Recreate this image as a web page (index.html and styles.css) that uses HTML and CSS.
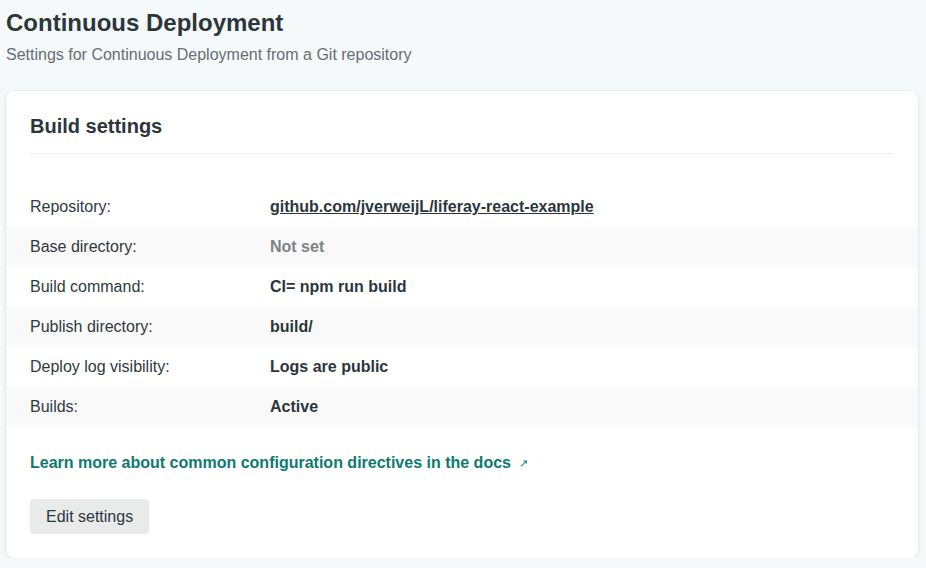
FILE: index.html
```html
<!DOCTYPE html>
<html>
<head>
<meta charset="utf-8">
<link rel="stylesheet" href="styles.css">
</head>
<body>
<div class="page">
  <header class="page-header">
    <h1 class="page-title">Continuous Deployment</h1>
    <p class="page-subtitle">Settings for Continuous Deployment from a Git repository</p>
  </header>
  <section class="card">
    <div class="card-header">
      <h2 class="card-title">Build settings</h2>
    </div>
    <dl class="settings">
      <div class="row"><dt>Repository:</dt><dd><a class="repo" href="#">github.com/jverweijL/liferay-react-example</a></dd></div>
      <div class="row striped"><dt>Base directory:</dt><dd class="muted">Not set</dd></div>
      <div class="row"><dt>Build command:</dt><dd>CI= npm run build</dd></div>
      <div class="row striped"><dt>Publish directory:</dt><dd>build/</dd></div>
      <div class="row"><dt>Deploy log visibility:</dt><dd>Logs are public</dd></div>
      <div class="row striped"><dt>Builds:</dt><dd>Active</dd></div>
    </dl>
    <p class="docs"><a class="docs-link" href="#">Learn more about common configuration directives in the docs<span class="ext">&#8599;</span></a></p>
    <button class="btn">Edit settings</button>
  </section>
</div>
</body>
</html>
```
FILE: styles.css
```css
* { box-sizing: border-box; }
html, body { margin: 0; padding: 0; }
body {
  background: #f6f9fa;
  font-family: "Liberation Sans", Arial, sans-serif;
  color: #2e3a40;
}
.page { padding: 0 8px 0 6px; }
.page-header { padding-top: 7px; }
.page-title {
  margin: 0;
  font-size: 24px;
  line-height: 32px;
  font-weight: 700;
  color: #2b363c;
}
.page-subtitle {
  margin: 4px 0 0;
  font-size: 16px;
  line-height: 24px;
  color: #646e74;
}
.card {
  margin-top: 24px;
  background: #fff;
  border-radius: 8px;
  box-shadow: 0 0 0 1px rgba(0,0,0,0.02), 0 1px 4px rgba(0,0,0,0.09);
  padding: 23px 0 24px;
}
.card-header {
  margin: 0 24px;
  padding-bottom: 15px;
  border-bottom: 1px solid #ececec;
}
.card-title {
  margin: 0;
  font-size: 20px;
  line-height: 24px;
  font-weight: 700;
  color: #2b363c;
}
.settings { margin: 33px 0 0; }
.row {
  display: flex;
  align-items: center;
  height: 40px;
  padding: 0 24px;
  font-size: 16px;
}
.row.striped { background: #f9f9f9; }
.row dt {
  width: 240px;
  flex: none;
  color: #2e3a40;
}
.row dd {
  margin: 0;
  font-weight: 700;
  color: #2b363c;
}
.row dd.muted { color: #7c8387; }
.repo { color: #2b363c; text-decoration: underline; }
.docs {
  margin: 24px 24px 0;
  font-size: 16px;
  line-height: 24px;
}
.docs-link {
  color: #0d7a70;
  font-weight: 700;
  text-decoration: none;
}
.ext {
  font-size: 11px;
  font-weight: 400;
  margin-left: 8px;
  vertical-align: 1px;
}
.btn {
  display: block;
  margin: 24px 0 0 24px;
  height: 35px;
  padding: 0 16px;
  border: none;
  border-radius: 4px;
  background: #e9ebeb;
  font-family: "Liberation Sans", Arial, sans-serif;
  font-size: 16px;
  color: #2b363c;
}
```
